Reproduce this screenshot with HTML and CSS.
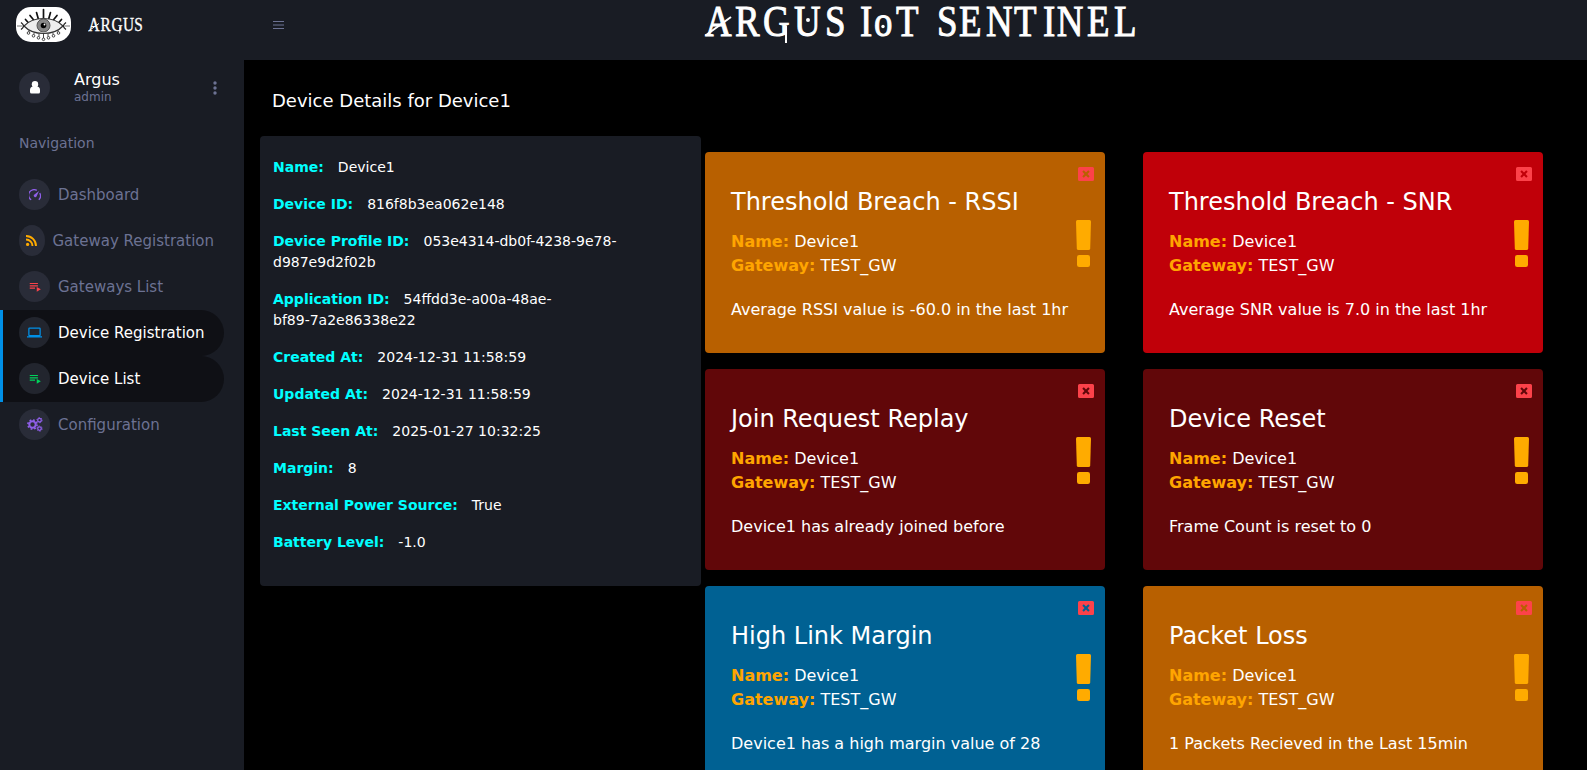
FILE: index.html
```html
<!DOCTYPE html>
<html lang="en">
<head>
<meta charset="utf-8">
<title>Argus IoT Sentinel</title>
<link rel="stylesheet" href="styles.css">
</head>
<body>
<svg class="defs" aria-hidden="true">
  <symbol id="playlist" viewBox="0 0 24 24"><path fill="currentColor" d="M3 5h14v2H3zM3 9h14v2H3zM3 13h9v2H3zM15 12v8l7-4z"/></symbol>
  <symbol id="close" viewBox="0 0 16 14"><path fill="currentColor" fill-rule="evenodd" d="M1.500 0h13a1.500 1.500 0 0 1 1.500 1.500v11a1.500 1.500 0 0 1-1.500 1.500h-13A1.500 1.500 0 0 1 0 12.500v-11A1.500 1.500 0 0 1 1.500 0zM5.800 3.300 4.300 4.800 6.500 7 4.300 9.200l1.500 1.500L8 8.500l2.200 2.200 1.500-1.500L9.500 7l2.200-2.200-1.500-1.500L8 5.500z"/></symbol>
  <symbol id="exclaim" viewBox="0 0 15 48"><path fill="currentColor" d="M1.500 0h12Q15 0 15 1.600L14.200 28.400Q14.100 30 12.500 30H2.500Q.9 30 .8 28.400L0 1.600Q0 0 1.500 0z"/><rect x="1" y="35" width="13" height="12" rx="2.200" fill="currentColor"/></symbol>
</svg>
<div class="page">
  <aside class="sidebar">
    <div class="brand">
      <svg class="eye" viewBox="0 0 55 35">
        <rect width="55" height="35" rx="15" fill="#fff"/>
        <g fill="none" stroke="#111" stroke-width="1.700" stroke-linecap="round"><path d="M9.500 12.500l3.500 4M14 8.500l4.500 5.500M20.500 5.500l2 7M27.500 2.500v9M34.500 5.500l-2 7M41 8.500l-4.500 5.500M45.500 12.500l-3.500 4"/></g>
        <path d="M8 19Q15 11.500 27.500 11.500T47 19Q40 26.500 27.500 26.500T8 19z" fill="#eee" stroke="#333" stroke-width="1.200"/>
        <path d="M1 19h5M49 19h5" stroke="#777"/>
        <path d="M5 15.500q5 3.500 0 7M50 15.500q-5 3.500 0 7" fill="none" stroke="#222" stroke-width="1.300"/>
        <circle cx="27.500" cy="18.500" r="6.500" fill="#888" stroke="#555"/>
        <circle cx="27.500" cy="18.500" r="2.800" fill="#000"/><circle cx="28.500" cy="17.500" r=".9" fill="#fff"/>
        <g fill="none" stroke="#333" stroke-width=".9"><path d="M13 23v2M18 25.500v2M23 27v2.500M27.500 27v4M32 27v2.500M37 25.500v2M42 23v2"/><circle cx="12.500" cy="26" r="1.300"/><circle cx="17.500" cy="28.800" r="1.300"/><circle cx="22.500" cy="30.800" r="1.300"/><circle cx="27.500" cy="32.300" r="1.300"/><circle cx="32.500" cy="30.800" r="1.300"/><circle cx="37.500" cy="28.800" r="1.300"/><circle cx="42.500" cy="26" r="1.300"/></g>
      </svg>
      <svg class="brand-name" viewBox="0 0 56 22"><text transform="scale(.85 1)" x=".6 14.700 27.600 41.200 54.500" y="17">ARGUS</text><path d="M.5 17 11 9.500M31.800 13v6.500"/></svg>
    </div>
    <div class="profile">
      <span class="disc"><svg width="12" height="13" viewBox="0 0 12 13"><circle cx="6" cy="3.200" r="3.200" fill="#fff"/><path d="M3.500 5.500h5Q11 6 11 9v2Q11 12.500 9.500 12.500h-7Q1 12.500 1 11V9Q1 6 3.500 5.500z" fill="#fff"/></svg></span>
      <div class="who"><div class="user">Argus</div><div class="role">admin</div></div>
      <svg class="dots" width="4" height="14" viewBox="0 0 4 14" fill="currentColor"><circle cx="2" cy="2" r="1.700"/><circle cx="2" cy="7" r="1.700"/><circle cx="2" cy="12" r="1.700"/></svg>
    </div>
    <div class="nav-title">Navigation</div>
    <nav>
      <a class="item"><span class="disc purple"><svg width="12" height="12" viewBox="0 0 12 12"><path d="M2.200 10.800A5.300 5.300 0 0 1 7.800 1.400M10.700 4.200A5.300 5.300 0 0 1 9.800 10.800" fill="none" stroke="currentColor" stroke-width="1.300"/><path d="M10 2 7.500 7.600A1.600 1.600 0 0 1 4.800 6z" fill="currentColor"/></svg></span>Dashboard</a>
      <a class="item"><span class="disc narrow yellow"><svg width="11" height="11" viewBox="0 0 11 11"><circle cx="1.600" cy="9.400" r="1.600" fill="currentColor"/><path d="M0 4.500A6.500 6.500 0 0 1 6.500 11M0 1A10 10 0 0 1 10 11" fill="none" stroke="currentColor" stroke-width="1.900"/></svg></span>Gateway Registration</a>
      <a class="item"><span class="disc red"><svg width="14" height="14"><use href="#playlist"/></svg></span>Gateways List</a>
      <a class="item active"><span class="disc blue"><svg width="15" height="15" viewBox="0 0 24 24"><path fill="currentColor" d="M4 6h16v10H4m16 2a2 2 0 0 0 2-2V6a2 2 0 0 0-2-2H4a2 2 0 0 0-2 2v10a2 2 0 0 0 2 2H0v2h24v-2z"/></svg></span>Device Registration</a>
      <a class="item active"><span class="disc green"><svg width="14" height="14"><use href="#playlist"/></svg></span>Device List</a>
      <a class="item"><span class="disc purple"><svg width="16" height="15" viewBox="0 0 16 15" fill="none" stroke="currentColor"><circle cx="5.500" cy="7.500" r="3.200" stroke-width="2"/><circle cx="5.500" cy="7.500" r="4.600" stroke-width="1.600" stroke-dasharray="1.800 1.812"/><circle cx="12.500" cy="3.200" r="1.800" stroke-width="1.300"/><circle cx="12.500" cy="3.200" r="2.600" stroke-dasharray="1.300 1.423"/><circle cx="12.500" cy="11.600" r="1.800" stroke-width="1.300"/><circle cx="12.500" cy="11.600" r="2.600" stroke-dasharray="1.300 1.423"/></svg></span>Configuration</a>
    </nav>
  </aside>
  <div class="main">
    <header class="topbar">
      <svg class="menu" width="11" height="8" viewBox="0 0 11 8"><path d="M0 .5h11M0 4h11M0 7.500h11" stroke="currentColor"/></svg>
      <svg class="wordmark" viewBox="0 0 440 60">
        <text transform="scale(.82 1)" y="36" x="3.700 40.200 74.400 112.200 150 175 192.700 209.800 236.600 264 286.600 313.400 346.300 380.500 415.900 432.500 469.500 502.400">ARGUS IoT SENTINEL</text>
        <path d="M3.500 35.500 29 17M84 26v17" fill="none" stroke="#fff" stroke-width="2"/><circle cx="106" cy="20" r="2"/><circle cx="181" cy="26.500" r="1.700"/>
      </svg>
    </header>
    <main class="content">
      <h1>Device Details for Device1</h1>
      <div class="columns">
        <section class="details">
          <p><b>Name:</b>Device1</p>
          <p><b>Device ID:</b>816f8b3ea062e148</p>
          <p><b>Device Profile ID:</b>053e4314-db0f-4238-9e78-<br>d987e9d2f02b</p>
          <p><b>Application ID:</b>54ffdd3e-a00a-48ae-<br>bf89-7a2e86338e22</p>
          <p><b>Created At:</b>2024-12-31 11:58:59</p>
          <p><b>Updated At:</b>2024-12-31 11:58:59</p>
          <p><b>Last Seen At:</b>2025-01-27 10:32:25</p>
          <p><b>Margin:</b>8</p>
          <p><b>External Power Source:</b>True</p>
          <p><b>Battery Level:</b>-1.0</p>
        </section>
        <section class="alerts">
          <article class="card orange"><div class="body"><h2>Threshold Breach - RSSI</h2><div><b>Name:</b> Device1</div><div><b>Gateway:</b> TEST_GW</div><p>Average RSSI value is -60.0 in the last 1hr</p></div><div class="marks"><svg class="close"><use href="#close"/></svg><svg class="exclaim"><use href="#exclaim"/></svg></div></article>
          <article class="card crimson"><div class="body"><h2>Threshold Breach - SNR</h2><div><b>Name:</b> Device1</div><div><b>Gateway:</b> TEST_GW</div><p>Average SNR value is 7.0 in the last 1hr</p></div><div class="marks"><svg class="close"><use href="#close"/></svg><svg class="exclaim"><use href="#exclaim"/></svg></div></article>
          <article class="card maroon"><div class="body"><h2>Join Request Replay</h2><div><b>Name:</b> Device1</div><div><b>Gateway:</b> TEST_GW</div><p>Device1 has already joined before</p></div><div class="marks"><svg class="close"><use href="#close"/></svg><svg class="exclaim"><use href="#exclaim"/></svg></div></article>
          <article class="card maroon"><div class="body"><h2>Device Reset</h2><div><b>Name:</b> Device1</div><div><b>Gateway:</b> TEST_GW</div><p>Frame Count is reset to 0</p></div><div class="marks"><svg class="close"><use href="#close"/></svg><svg class="exclaim"><use href="#exclaim"/></svg></div></article>
          <article class="card ocean"><div class="body"><h2>High Link Margin</h2><div><b>Name:</b> Device1</div><div><b>Gateway:</b> TEST_GW</div><p>Device1 has a high margin value of 28</p></div><div class="marks"><svg class="close"><use href="#close"/></svg><svg class="exclaim"><use href="#exclaim"/></svg></div></article>
          <article class="card orange"><div class="body"><h2>Packet Loss</h2><div><b>Name:</b> Device1</div><div><b>Gateway:</b> TEST_GW</div><p>1 Packets Recieved in the Last 15min</p></div><div class="marks"><svg class="close"><use href="#close"/></svg><svg class="exclaim"><use href="#exclaim"/></svg></div></article>
        </section>
      </div>
    </main>
  </div>
</div>
</body>
</html>
```
FILE: styles.css
```css
* { box-sizing: border-box; }
body { margin: 0; background: #000; color: #fff; font-family: "DejaVu Sans", sans-serif; overflow: hidden; }
h1, h2, p { margin: 0; font-weight: 400; }
svg { display: block; flex: none; }
.defs { display: none; }
.page { display: flex; height: 770px; overflow: hidden; }

.sidebar { width: 244px; flex: none; background: #191c24; color: #6c7293; }
.brand { display: flex; align-items: center; height: 60px; padding: 0 0 11px 16px; }
.eye { width: 55px; height: 35px; }
.brand-name { width: 56px; height: 22px; margin-left: 17px; fill: #fff; stroke: #fff; stroke-width: .3; }
.brand-name text { font: 18px "Liberation Serif", serif; }
.brand-name path { stroke-width: 1; }
.profile { display: flex; align-items: center; height: 55px; padding: 0 27px 0 19px; }
.disc { display: flex; align-items: center; justify-content: center; flex: none; width: 31px; height: 31px; border-radius: 50%; background: #292c38; }
.narrow { width: 25.5px; }
.who { margin-left: 24px; flex: 1; }
.user { color: #fff; font-size: 16px; line-height: 19px; }
.role { font-size: 12px; line-height: 17px; }
.nav-title { margin-top: 17px; padding-left: 19px; font-size: 14px; line-height: 22px; height: 39.6px; }
.item { display: flex; align-items: center; width: 224px; height: 46px; padding-left: 16px; border-left: 3px solid transparent; font-size: 15px; gap: 8px; white-space: nowrap; }
.active { color: #fff; background: #0f1015; border-left-color: #0090e7; border-radius: 0 100px 100px 0; }
.active .disc { background: #22252e; }
.purple { color: #8f5fe8; }
.yellow { color: #ffab00; }
.red { color: #fc424a; }
.blue { color: #0090e7; }
.green { color: #00d25b; }

.main { flex: 1; min-width: 0; }
.topbar { display: flex; height: 60px; background: #191c24; color: #6c7293; }
.menu { margin: 21px 0 0 29px; }
.wordmark { width: 440px; height: 60px; margin-left: 418px; fill: #fff; }
.wordmark text { font: 45px "Liberation Serif", serif; stroke: #fff; stroke-width: 1; }
.content { padding: 29px 0 0 16px; }
h1 { padding-left: 12px; font-size: 18px; line-height: 24px; height: 47px; }
.columns { display: flex; align-items: flex-start; gap: 4px; }
.details { width: 441px; height: 450px; padding: 21px 13px; border-radius: 4px; background: #191c24; font-size: 14px; line-height: 21px; }
.details p { margin-bottom: 16px; }
.details b { color: #0ff; margin-right: 14px; }
.alerts { display: grid; grid-template-columns: 400px 400px; gap: 16px 38px; padding-top: 16px; }
.card { display: flex; justify-content: space-between; height: 201px; padding: 15px 11px 0 26px; border-radius: 4px; font-size: 16px; line-height: 24px; }
.card h2 { font-size: 24px; line-height: 30px; margin: 20px 0 13px; }
.card p { margin-top: 20px; }
.card b { color: #ffa500; }
.marks { display: flex; flex-direction: column; align-items: flex-end; }
.close { width: 16px; height: 14px; color: #fc424a; }
.exclaim { width: 15px; height: 48px; margin: 39px 3px 0 0; color: #ffab00; }
.orange { background: #b86000; }
.crimson { background: #c00009; }
.maroon { background: #610709; }
.ocean { background: #006193; }
```
